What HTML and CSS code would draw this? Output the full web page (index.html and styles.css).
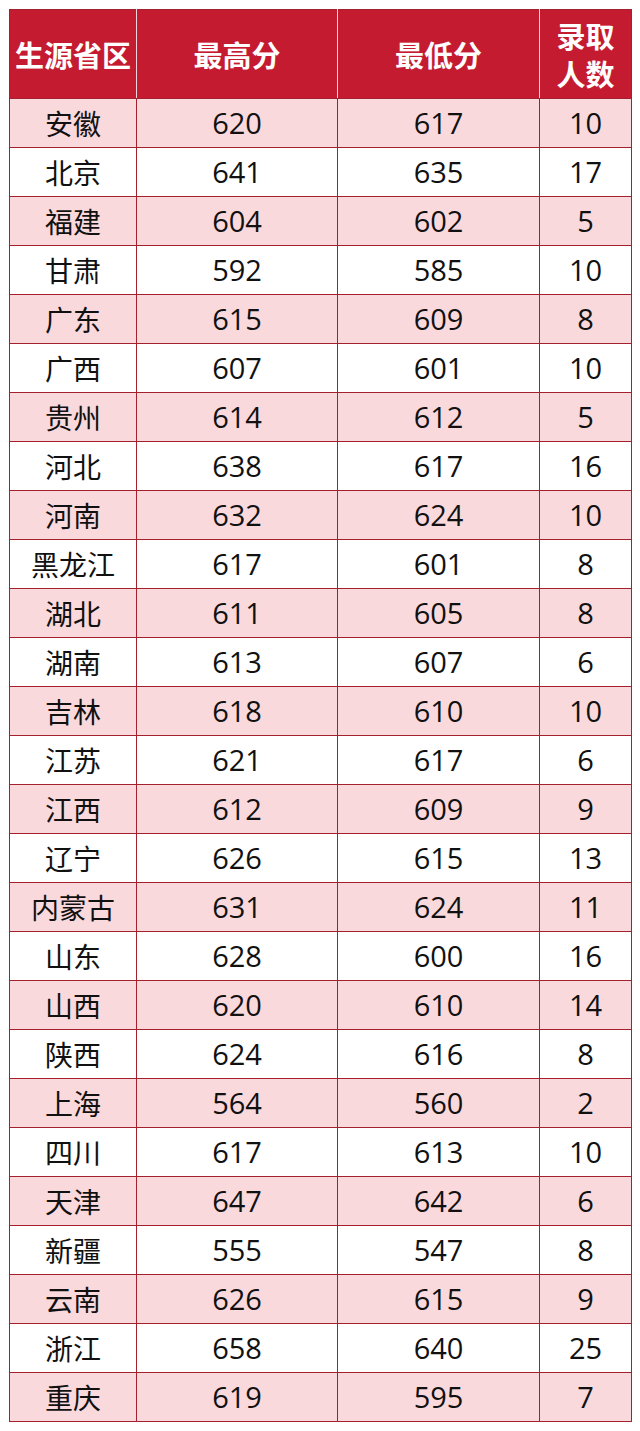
FILE: index.html
```html
<!DOCTYPE html>
<html lang="zh">
<head>
<meta charset="utf-8">
<link rel="stylesheet" href="styles.css">
</head>
<body>
<table class="scores">
<colgroup><col class="c1"><col class="c2"><col class="c3"><col class="c4"></colgroup>
<thead>
<tr><th>生源省区</th><th>最高分</th><th>最低分</th><th class="narrow"><span class="line">录取</span><span class="line">人数</span></th></tr>
</thead>
<tbody>
<tr><td>安徽</td><td>620</td><td>617</td><td>10</td></tr>
<tr><td>北京</td><td>641</td><td>635</td><td>17</td></tr>
<tr><td>福建</td><td>604</td><td>602</td><td>5</td></tr>
<tr><td>甘肃</td><td>592</td><td>585</td><td>10</td></tr>
<tr><td>广东</td><td>615</td><td>609</td><td>8</td></tr>
<tr><td>广西</td><td>607</td><td>601</td><td>10</td></tr>
<tr><td>贵州</td><td>614</td><td>612</td><td>5</td></tr>
<tr><td>河北</td><td>638</td><td>617</td><td>16</td></tr>
<tr><td>河南</td><td>632</td><td>624</td><td>10</td></tr>
<tr><td>黑龙江</td><td>617</td><td>601</td><td>8</td></tr>
<tr><td>湖北</td><td>611</td><td>605</td><td>8</td></tr>
<tr><td>湖南</td><td>613</td><td>607</td><td>6</td></tr>
<tr><td>吉林</td><td>618</td><td>610</td><td>10</td></tr>
<tr><td>江苏</td><td>621</td><td>617</td><td>6</td></tr>
<tr><td>江西</td><td>612</td><td>609</td><td>9</td></tr>
<tr><td>辽宁</td><td>626</td><td>615</td><td>13</td></tr>
<tr><td>内蒙古</td><td>631</td><td>624</td><td>11</td></tr>
<tr><td>山东</td><td>628</td><td>600</td><td>16</td></tr>
<tr><td>山西</td><td>620</td><td>610</td><td>14</td></tr>
<tr><td>陕西</td><td>624</td><td>616</td><td>8</td></tr>
<tr><td>上海</td><td>564</td><td>560</td><td>2</td></tr>
<tr><td>四川</td><td>617</td><td>613</td><td>10</td></tr>
<tr><td>天津</td><td>647</td><td>642</td><td>6</td></tr>
<tr><td>新疆</td><td>555</td><td>547</td><td>8</td></tr>
<tr><td>云南</td><td>626</td><td>615</td><td>9</td></tr>
<tr><td>浙江</td><td>658</td><td>640</td><td>25</td></tr>
<tr><td>重庆</td><td>619</td><td>595</td><td>7</td></tr>
</tbody>
</table>
</body>
</html>
```
FILE: styles.css
```css
html, body {
  margin: 0;
  padding: 0;
  background: #ffffff;
}
body {
  font-family: "Open Sans", "Noto Sans CJK SC", sans-serif;
}
.scores {
  border-collapse: collapse;
  table-layout: fixed;
  width: 622px;
  margin: 9px 0 0 9px;
}
.c1 { width: 127px; }
.c2 { width: 201px; }
.c3 { width: 202px; }
.c4 { width: 92px; }
.scores th,
.scores td {
  border: 1px solid #a3202f;
  padding: 0;
  text-align: center;
  vertical-align: middle;
}
.scores th {
  background: #c51b31;
  color: #ffffff;
  font-family: "Noto Sans CJK SC", sans-serif;
  font-weight: 700;
  font-size: 29px;
  height: 88px;
  line-height: 34px;
  border-left-color: #f4d6da;
  border-right-color: #f4d6da;
}
.scores th:first-child {
  border-left-color: #a3202f;
}
.scores th:last-child {
  border-right-color: #a3202f;
}
.scores th .line {
  display: block;
  line-height: 38px;
}
.scores td {
  height: 48px;
  font-size: 29px;
  line-height: 30px;
  color: #111111;
}
.scores td:first-child {
  font-family: "Noto Sans CJK SC", sans-serif;
  font-size: 28px;
}
.scores tbody tr:nth-child(odd) td {
  background: #fad9dd;
}
.scores tbody tr:nth-child(even) td {
  background: #ffffff;
}
```
